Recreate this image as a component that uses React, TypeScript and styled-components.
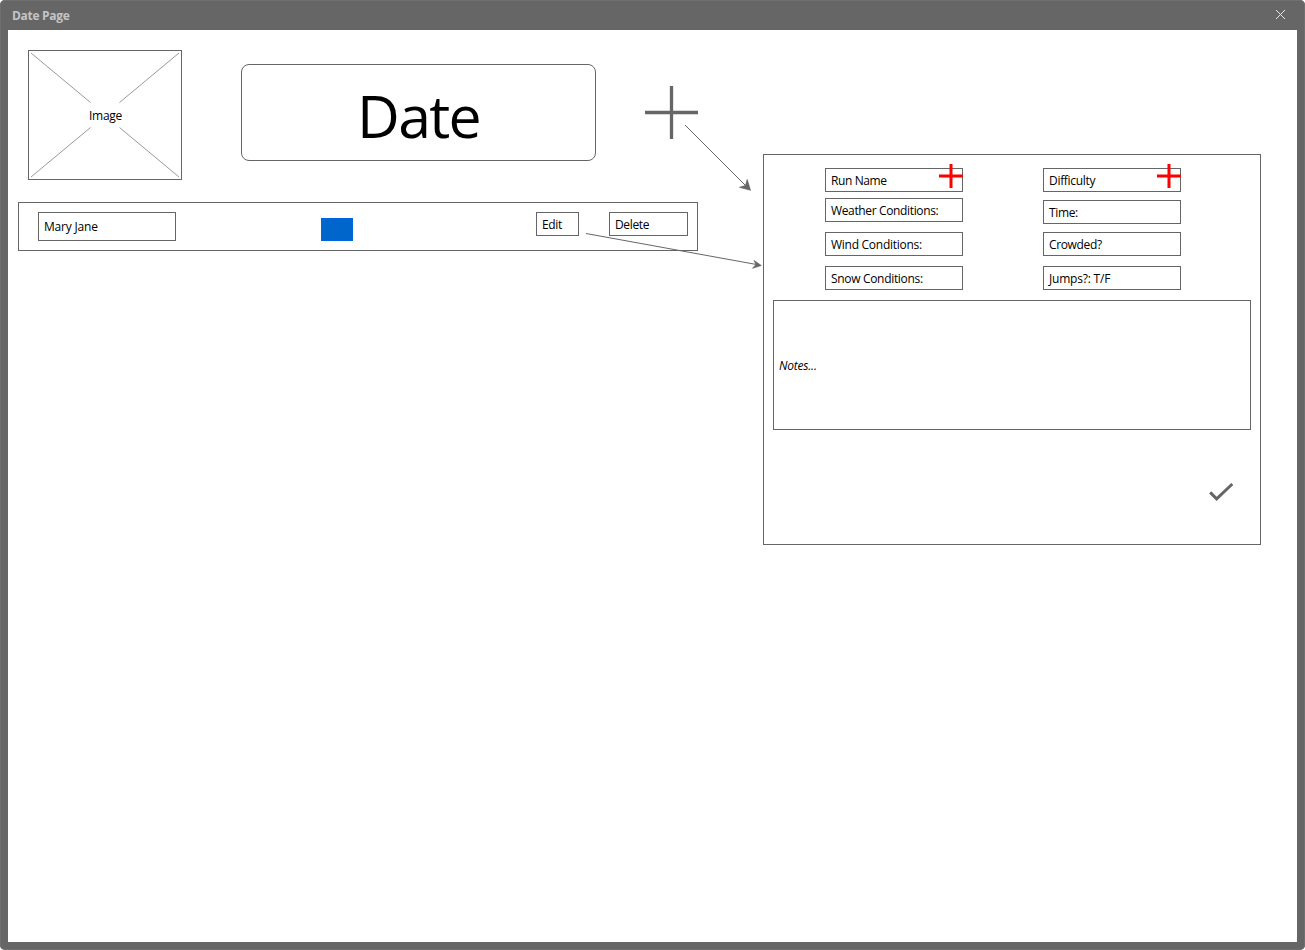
import React from "react";
import styled, { createGlobalStyle } from "styled-components";

const GlobalStyle = createGlobalStyle`
  * { box-sizing: border-box; }
  html, body { margin: 0; padding: 0; background: #fff; }
  body { font-family: "Open Sans", "Noto Sans", sans-serif; font-size: 12px; color: #000; overflow: hidden; }
  svg { display: block; }
`;

const Window = styled.div`
  position: relative;
  display: flex;
  flex-direction: column;
  width: 1305px;
  height: 950px;
  padding: 0 8px 8px;
  background: #666;
  border-radius: 5px;
  box-shadow: inset 0 0 0 1px #707070;
`;

const TitleBar = styled.header`
  display: flex;
  align-items: flex-start;
  justify-content: space-between;
  height: 30px;
  padding: 0 11px 0 4px;
  & > svg { margin-top: 9px; }
`;

const Title = styled.span`
  padding-top: 1px;
  font-weight: 700;
  color: #c4c4c4;
  letter-spacing: -0.3px;
  line-height: 30px;
`;

const Body = styled.main`
  display: flex;
  align-items: flex-start;
  flex: 1;
  padding: 20px 36px 0 10px;
  background: #fff;
`;

const RunList = styled.section`
  display: flex;
  flex-direction: column;
  gap: 22px;
  width: 680px;
`;

const Header = styled.div`
  display: flex;
  align-items: flex-start;
  height: 130px;
  padding-left: 10px;
`;

const Outline = styled.div`
  border: 1px solid #666;
  background: #fff;
`;

const ImagePlaceholder = styled(Outline)`
  display: grid;
  width: 154px;
  height: 130px;
  & > * { grid-area: 1 / 1; }
`;

const ImageLabel = styled.span`
  place-self: center;
  padding: 1px 0 0 1px;
  letter-spacing: -0.25px;
`;

const DateBox = styled(Outline)`
  display: flex;
  justify-content: center;
  width: 355px;
  height: 97px;
  margin: 14px 49px 0 59px;
  border-radius: 8px;
  font-size: 59px;
  line-height: 100px;
  letter-spacing: -1.7px;
`;

const AddButton = styled.div`
  margin-top: 36px;
`;

const RunRow = styled(Outline)`
  display: flex;
  align-items: flex-start;
  height: 49px;
  padding: 9px 9px 0 19px;
`;

const Field = styled(Outline)<{ $w?: number; $h?: number; $ls?: number }>`
  display: flex;
  align-items: center;
  flex: none;
  width: ${(p) => p.$w ?? 138}px;
  height: ${(p) => p.$h ?? 24}px;
  padding: ${(p) => (p.$h ? 0 : 1)}px 0 0 5px;
  white-space: nowrap;
  letter-spacing: ${(p) => p.$ls ?? -0.2}px;
`;

const Swatch = styled.div`
  width: 32px;
  height: 23px;
  margin: 6px 183px 0 145px;
  background: #0066cc;
  border: 1px solid #0066e6;
`;

const Actions = styled.div`
  display: flex;
  gap: 30px;
`;

const Panel = styled(Outline)`
  display: flex;
  flex-direction: column;
  width: 498px;
  height: 391px;
  margin: 104px 0 0 65px;
  padding: 13px 9px 0;
`;

const Columns = styled.div`
  display: flex;
  gap: 80px;
  height: 132px;
  padding-left: 52px;
`;

const Column = styled.div<{ $gaps: string }>`
  display: grid;
  align-content: start;
  grid-template-rows: ${(p) => p.$gaps};
`;

const FieldWrap = styled.div`
  position: relative;
`;

const RedPlus = styled.svg`
  position: absolute;
  top: -4px;
  right: 0;
`;

const Notes = styled(Outline)`
  display: flex;
  align-items: center;
  height: 130px;
  padding: 1px 0 0 5px;
  font-style: italic;
  letter-spacing: -0.2px;
`;

const Confirm = styled.div`
  display: flex;
  justify-content: flex-end;
  padding: 52px 17px 0 0;
`;

const Arrows = styled.svg`
  position: absolute;
  top: 0;
  left: 0;
  pointer-events: none;
`;

type FieldSpec = { label: string; spacing: number; required?: boolean };

const conditions: FieldSpec[] = [
  { label: "Run Name", spacing: -0.4, required: true },
  { label: "Weather Conditions:", spacing: -0.36 },
  { label: "Wind Conditions:", spacing: -0.27 },
  { label: "Snow Conditions:", spacing: -0.32 },
];

const details: FieldSpec[] = [
  { label: "Difficulty", spacing: -0.3, required: true },
  { label: "Time:", spacing: -0.35 },
  { label: "Crowded?", spacing: -0.36 },
  { label: "Jumps?: T/F", spacing: -0.2 },
];

const FieldColumn = ({ fields, gaps }: { fields: FieldSpec[]; gaps: string }) => (
  <Column $gaps={gaps}>
    {fields.map((f) => (
      <FieldWrap key={f.label}>
        <Field $ls={f.spacing}>{f.label}</Field>
        {f.required && (
          <RedPlus width="24" height="24" viewBox="0 0 24 24">
            <path d="M0 12H24M12 0V24" stroke="#f00" strokeWidth="3" />
          </RedPlus>
        )}
      </FieldWrap>
    ))}
  </Column>
);

export default function App() {
  return (
    <Window>
      <GlobalStyle />
      <TitleBar>
        <Title>Date Page</Title>
        <svg width="11" height="11" viewBox="0 0 11 11">
          <path d="M1 1L10 10M10 1L1 10" stroke="#e6e6e6" strokeWidth="1" />
        </svg>
      </TitleBar>
      <Body>
        <RunList>
          <Header>
            <ImagePlaceholder>
              <svg width="152" height="128" viewBox="0 0 152 128">
                <path
                  d="M2 2L61.5 51.5M150 2L90.5 51.5M2 126L61.5 76.5M150 126L90.5 76.5"
                  stroke="#999"
                  strokeWidth="1"
                />
              </svg>
              <ImageLabel>Image</ImageLabel>
            </ImagePlaceholder>
            <DateBox>Date</DateBox>
            <AddButton>
              <svg width="53" height="53" viewBox="0 0 53 53">
                <path d="M0 26.5H53M26.5 0V53" stroke="#666" strokeWidth="3.3" />
              </svg>
            </AddButton>
          </Header>
          <RunRow>
            <Field $h={29}>Mary Jane</Field>
            <Swatch />
            <Actions>
              <Field $w={43} $ls={-0.35}>Edit</Field>
              <Field $w={79} $ls={-0.35}>Delete</Field>
            </Actions>
          </RunRow>
        </RunList>
        <Panel>
          <Columns>
            <FieldColumn fields={conditions} gaps="30px 34px 34px 24px" />
            <FieldColumn fields={details} gaps="32px 32px 34px 24px" />
          </Columns>
          <Notes>Notes...</Notes>
          <Confirm>
            <svg width="26" height="20" viewBox="0 0 26 20">
              <path d="M2.2 10.4L8.6 16.8L24.3 2" fill="none" stroke="#666" strokeWidth="3" />
            </svg>
          </Confirm>
        </Panel>
      </Body>
      <Arrows width="1305" height="950" viewBox="0 0 1305 950">
        <path d="M685 125L748 188M586 233.5L757 264.6" stroke="#666" strokeWidth="1" />
        <path
          d="M750.5 190.3L747.2 179.5L745.5 185.5L739.5 187.3ZM761.3 265.5L754 260.5L756 264.5L752.5 268.3Z"
          fill="#666"
          stroke="#666"
          strokeWidth="0.7"
        />
      </Arrows>
    </Window>
  );
}
